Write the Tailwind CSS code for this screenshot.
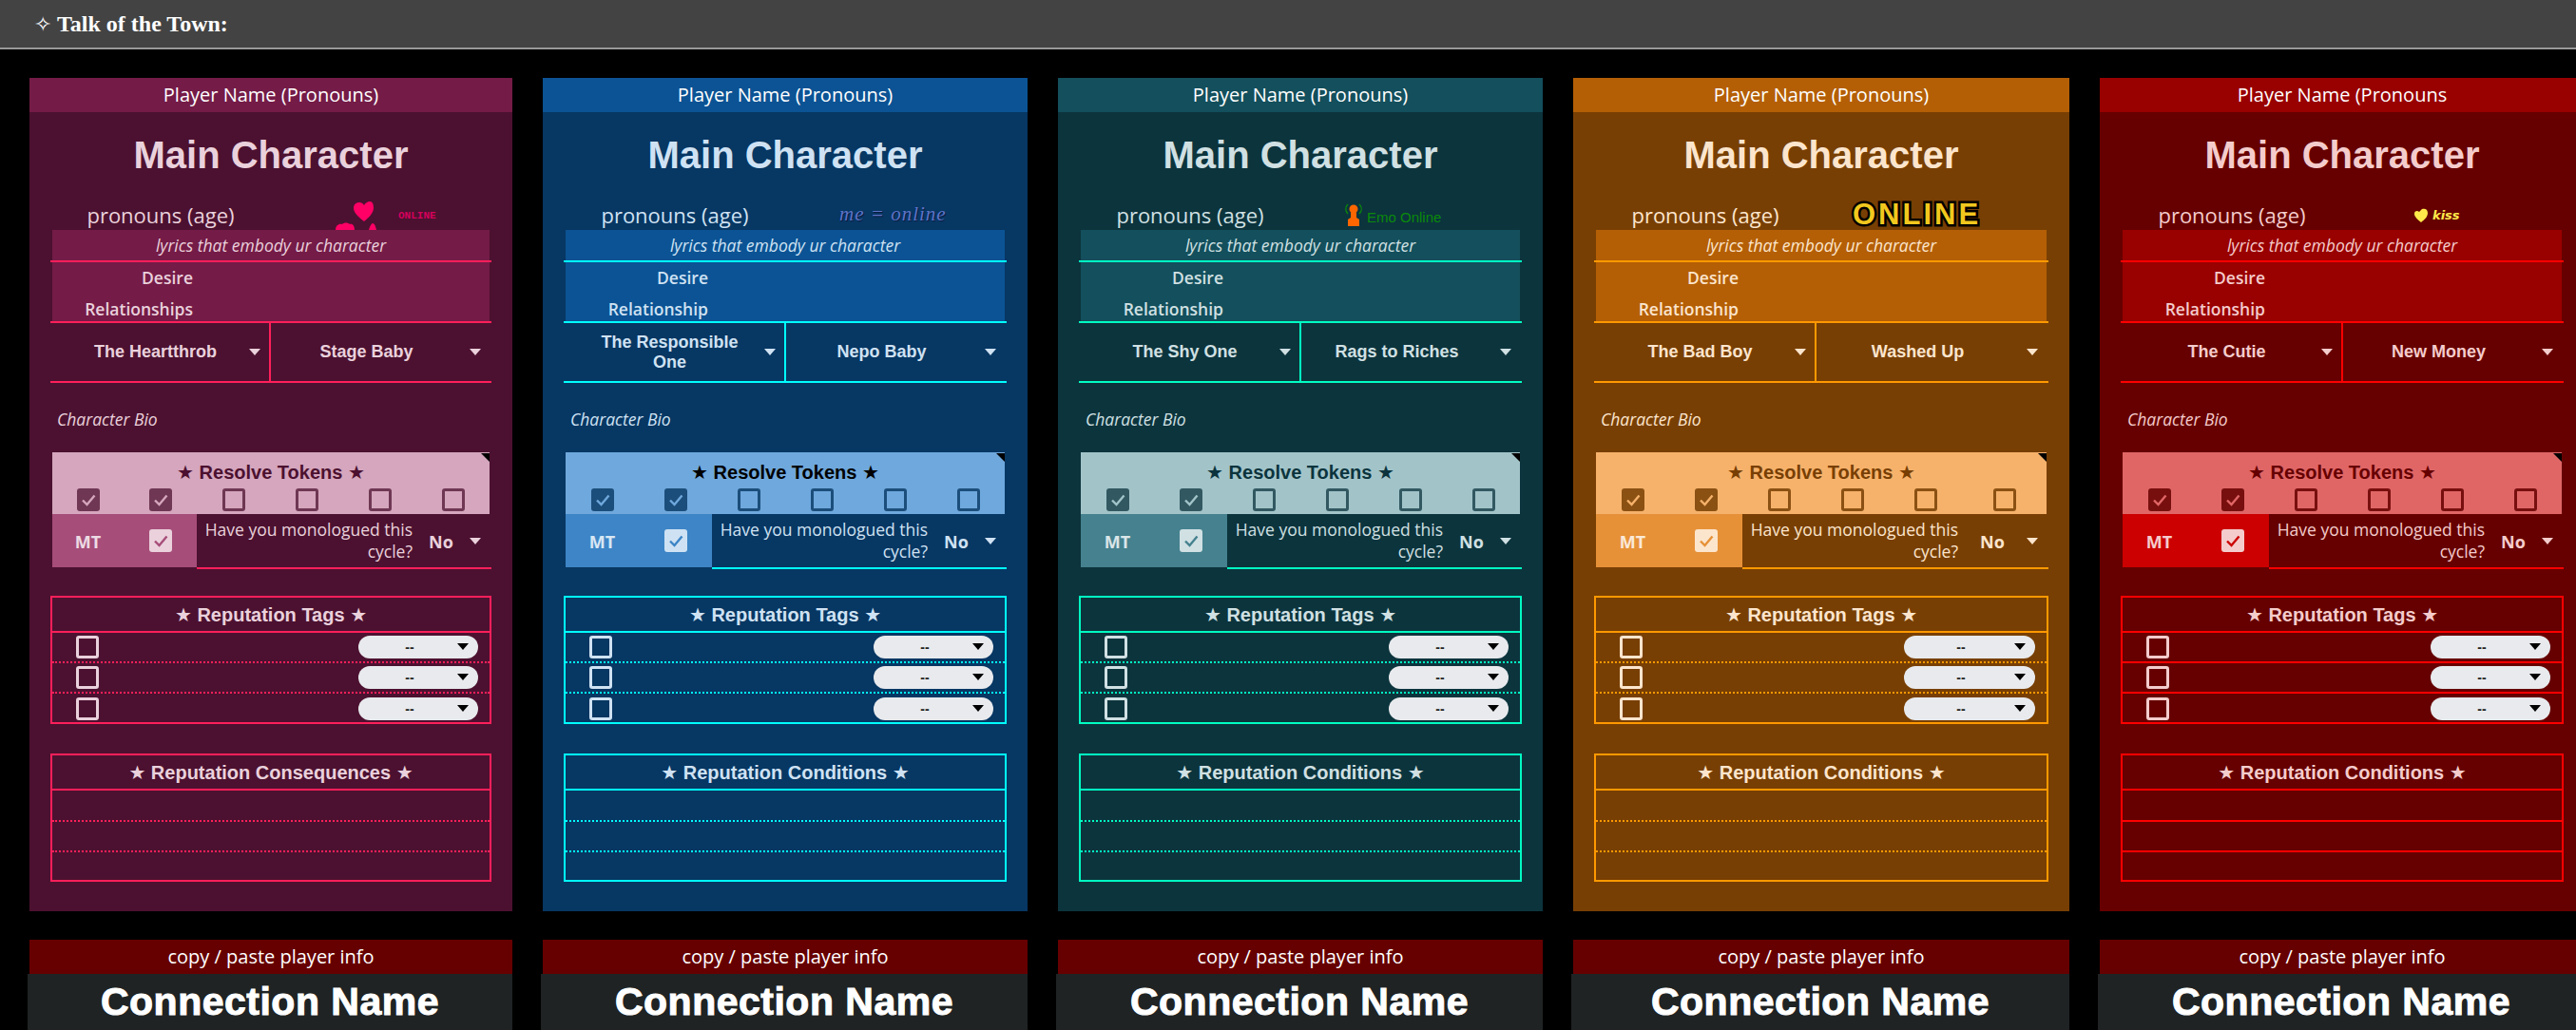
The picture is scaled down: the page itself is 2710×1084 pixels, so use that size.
<!DOCTYPE html>
<html lang="en">
<head>
    <meta charset="UTF-8">
    <meta name="viewport" content="width=device-width, initial-scale=1.0">
    <script src="https://cdn.jsdelivr.net/npm/@tailwindcss/browser@4"></script>
    <title>Talk of the Town</title>
</head>
<body class="bg-black h-[1084px] overflow-hidden font-['Open_Sans',sans-serif]">
    <!--sheet title bar-->
    <div class="h-[52px] bg-[#434343] border-b-2 border-[#999999] flex items-center pl-[36px] text-white font-bold text-[24px] font-['Liberation_Serif',serif]">
        <span class="font-['DejaVu_Sans',sans-serif] text-[22px] w-[24px] font-normal">✧</span>
        <span>Talk of the Town:</span>
    </div>
    <div id="cards" class="flex pl-[31px] pt-[30px] w-[2800px] gap-[32px]"></div>

    <script>
        //little online badges that sit next to the pronouns
        const badgeHeart = `<div class="ml-[68px] mt-[4px] flex items-start h-[30px] overflow-hidden">
            <svg width="66" height="30" viewBox="0 0 66 30" class="fill-[#ff0066] shrink-0">
                <path d="M30 21 C24 16 19 12 19 7 C19 3 22 1 25 1 C27 1 29 2 30 4 C32 1 34 0 36 0 C39 0 40 3 40 7 C40 12 35 17 30 21 Z"/>
                <path d="M0 30 C0 25 4 23 7 24 C9 22 13 22 15 24 C18 23 20 26 20 30 Z"/>
                <path d="M35 30 C36 26 38 23 39 23 C41 23 42 26 43 30 Z"/>
            </svg>
            <span class="font-['Liberation_Mono',monospace] text-[11px] leading-none font-bold text-[#d6005c] mt-[10px]">ONLINE</span>
        </div>`;
        const badgeScript = `<div class="ml-[56px] mt-[4px] font-['Liberation_Serif',serif] italic text-[21px] leading-[26px] tracking-[1px] text-[#5f74c8] [text-shadow:1px_1px_0_#0a1a40]">me = online</div>`;
        const badgeEmo = `<div class="ml-[46px] mt-[4px] flex items-end h-[26px]">
            <svg width="18" height="24" viewBox="0 0 18 24" fill="none" class="shrink-0">
                <path d="M3 1 C0 4 0 8 3 11 M15 1 C18 4 18 8 15 11" class="stroke-[#0a8a0a]" stroke-width="1.3"/>
                <circle cx="9" cy="6" r="4.5" class="fill-[#ff6600]"/>
                <path d="M6 10 H12 V15 L15 17 V24 H3 V17 L6 15 Z" class="fill-[#ff6600]"/>
            </svg>
            <span class="ml-[5px] font-['Liberation_Sans',sans-serif] text-[15px] leading-[18px] text-[#0a8a0a]">Emo Online</span>
        </div>`;
        const badgeGothic = `<div class="ml-[38px] h-[34px] flex items-center font-['Liberation_Sans',sans-serif] font-bold text-[31px] leading-none tracking-[3px] text-[#f2c81e] [-webkit-text-stroke:5px_black] [paint-order:stroke_fill]">ONLINE</div>`;
        const badgeKiss = `<div class="ml-[75px] mt-[9px] flex items-center h-[18px]">
            <svg width="15" height="15" viewBox="0 0 15 15" class="fill-[#ffe94a] shrink-0"><path d="M7 15 C3 12 0 9 0 6 C0 3 3 2 5 4 L8 1 C11 0 14 1 14 5 C14 9 11 12 7 15 Z"/></svg>
            <span class="ml-[4px] font-['DejaVu_Sans',sans-serif] font-bold italic text-[13px] leading-none text-[#ffe94a]">kiss</span>
        </div>`;

        //every class name written out in full per card
        const players = [
            {
                width: "w-[508px]", half: "w-[232px]", firstCol: "w-[75px]", lastCol: "w-[77px]", mtCell: "w-[152px]", labelCol: "w-[148px]", pill: "w-[126px]",
                dark: "bg-[#4c1130]", mid: "bg-[#741b47]", light: "bg-[#d5a6bd]", mt: "bg-[#a64d79]",
                text: "text-[#ead1dc]", title: "text-[#4c1130]",
                lineBg: "bg-[#ff1f5a]", line: "border-[#ff1f5a]", dots: "border-dotted",
                tickBorder: "border-[#4c1130]/75", tickFill: "bg-[#4c1130]/75", tickStroke: "stroke-[#d5a6bd]", mtStroke: "stroke-[#a64d79]",
                paleFill: "bg-[#ead1dc]", paleBorder: "border-[#ead1dc]", arrow: "fill-[#ead1dc]",
                name: "Player Name (Pronouns)", desire: "Relationships", left: "The Heartthrob", right: "Stage Baby", second: "Reputation Consequences", badge: badgeHeart
            },
            {
                width: "w-[510px]", half: "w-[234px]", firstCol: "w-[77px]", lastCol: "w-[77px]", mtCell: "w-[154px]", labelCol: "w-[150px]", pill: "w-[126px]",
                dark: "bg-[#073763]", mid: "bg-[#0b5394]", light: "bg-[#6fa8dc]", mt: "bg-[#3d85c6]",
                text: "text-[#cfe2f3]", title: "text-black",
                lineBg: "bg-[#00ffff]", line: "border-[#00ffff]", dots: "border-dotted",
                tickBorder: "border-[#073763]/80", tickFill: "bg-[#073763]/80", tickStroke: "stroke-[#6fa8dc]", mtStroke: "stroke-[#3d85c6]",
                paleFill: "bg-[#cfe2f3]", paleBorder: "border-[#cfe2f3]", arrow: "fill-[#cfe2f3]",
                name: "Player Name (Pronouns)", desire: "Relationship", left: "The Responsible One", right: "Nepo Baby", second: "Reputation Conditions", badge: badgeScript
            },
            {
                width: "w-[510px]", half: "w-[234px]", firstCol: "w-[77px]", lastCol: "w-[77px]", mtCell: "w-[154px]", labelCol: "w-[150px]", pill: "w-[126px]",
                dark: "bg-[#0c343d]", mid: "bg-[#134f5c]", light: "bg-[#a2c4c9]", mt: "bg-[#45818e]",
                text: "text-[#d0e0e3]", title: "text-[#0c343d]",
                lineBg: "bg-[#00ffc3]", line: "border-[#00ffc3]", dots: "border-dotted",
                tickBorder: "border-[#0c343d]/75", tickFill: "bg-[#0c343d]/75", tickStroke: "stroke-[#a2c4c9]", mtStroke: "stroke-[#45818e]",
                paleFill: "bg-[#d0e0e3]", paleBorder: "border-[#d0e0e3]", arrow: "fill-[#d0e0e3]",
                name: "Player Name (Pronouns)", desire: "Relationship", left: "The Shy One", right: "Rags to Riches", second: "Reputation Conditions", badge: badgeEmo
            },
            {
                width: "w-[522px]", half: "w-[234px]", firstCol: "w-[77px]", lastCol: "w-[89px]", mtCell: "w-[154px]", labelCol: "w-[150px]", pill: "w-[138px]",
                dark: "bg-[#783f04]", mid: "bg-[#b45f06]", light: "bg-[#f6b26b]", mt: "bg-[#e69138]",
                text: "text-[#fce5cd]", title: "text-[#783f04]",
                lineBg: "bg-[#ff9900]", line: "border-[#ff9900]", dots: "border-dotted",
                tickBorder: "border-[#783f04]/85", tickFill: "bg-[#783f04]/85", tickStroke: "stroke-[#f6b26b]", mtStroke: "stroke-[#e69138]",
                paleFill: "bg-[#fce5cd]", paleBorder: "border-[#fce5cd]", arrow: "fill-[#fce5cd]",
                name: "Player Name (Pronouns)", desire: "Relationship", left: "The Bad Boy", right: "Washed Up", second: "Reputation Conditions", badge: badgeGothic
            },
            {
                width: "w-[510px]", half: "w-[234px]", firstCol: "w-[77px]", lastCol: "w-[77px]", mtCell: "w-[154px]", labelCol: "w-[150px]", pill: "w-[126px]",
                dark: "bg-[#660000]", mid: "bg-[#990000]", light: "bg-[#e06666]", mt: "bg-[#cc0000]",
                text: "text-[#f4cccc]", title: "text-[#660000]",
                lineBg: "bg-[#ff0000]", line: "border-[#ff0000]", dots: "border-solid",
                tickBorder: "border-[#660000]/85", tickFill: "bg-[#660000]/85", tickStroke: "stroke-[#e06666]", mtStroke: "stroke-[#cc0000]",
                paleFill: "bg-[#f4cccc]", paleBorder: "border-[#f4cccc]", arrow: "fill-[#f4cccc]",
                name: "Player Name (Pronouns", desire: "Relationship", left: "The Cutie", right: "New Money", second: "Reputation Conditions", badge: badgeKiss
            }
        ];

        //function for the small dropdown triangle
        function arrow(p) {
            return `<svg width="12" height="7" viewBox="0 0 12 7" class="${p.arrow} shrink-0"><path d="M0 0 H12 L6 7 Z"/></svg>`;
        }
        //function for a dropdown cell in the archetype row
        function archetype(p, label) {
            return `<div class="flex-1 pr-[8px] text-center">${label}</div>${arrow(p)}`;
        }
        //function for a checkbox, checked or not
        function tick(borderClass, fillClass, strokeClass, checked) {
            const check = checked ? `<svg width="24" height="24" viewBox="0 0 24 24" fill="none" class="${strokeClass}"><path d="M6 12.5 L10.5 17 L18.5 7.5" stroke-width="2.4"/></svg>` : "";
            return `<div class="w-[24px] h-[24px] rounded-[3px] ${checked ? fillClass : "border-[3px] " + borderClass}">${check}</div>`;
        }
        //function for a row of the reputation tags
        function tagRow(p, extra) {
            return `<div class="h-[32px] flex items-center justify-between pl-[25px] pr-[12px] ${extra}">
                ${tick(p.paleBorder, "", "", false)}
                <div class="${p.pill} h-[24px] rounded-full bg-[#e8eaed] flex items-center">
                    <span class="flex-1 text-center pl-[4px] pt-[1px] text-[#222222] font-['Liberation_Sans',sans-serif] font-bold text-[14px]">--</span>
                    <svg width="12" height="7" viewBox="0 0 12 7" class="fill-black mr-[10px] mb-[2px]"><path d="M0 0 H12 L6 7 Z"/></svg>
                </div>
            </div>`;
        }
        //function for the star headed boxes
        function starTitle(p, label) {
            return `<div class="h-[37px] border-b-2 ${p.line} flex items-center justify-center font-['Liberation_Sans','DejaVu_Sans',sans-serif] font-bold text-[20px] ${p.text}">★ ${label} ★</div>`;
        }

        function card(p) {
            const cols = [p.firstCol, "w-[77px]", "w-[77px]", "w-[77px]", "w-[77px]", p.lastCol];
            const tokens = cols.map((c, i) => `<div class="${c} flex justify-center">${tick(p.tickBorder, p.tickFill, p.tickStroke, i < 2)}</div>`).join("");
            const rowLine = `border-b-2 ${p.dots} ${p.line}`;
            return `<div class="${p.width} shrink-0">
                <div class="h-[877px] ${p.dark} ${p.text}">
                    <div class="h-[36px] ${p.mid} text-white text-[20px] flex items-center justify-center">${p.name}</div>
                    <div class="h-[90px] flex items-center justify-center font-['Liberation_Sans',sans-serif] font-bold text-[40px]">Main Character</div>
                    <div class="mx-[22px] h-[34px] flex">
                        <div class="${p.half} text-center text-[22px] leading-[36px]">pronouns (age)</div>
                        ${p.badge}
                    </div>
                    <div class="mx-[22px]">
                        <div class="mx-[2px] h-[32px] ${p.mid} flex items-center justify-center italic text-[17.5px]">lyrics that embody ur character</div>
                        <div class="h-[2px] ${p.lineBg}"></div>
                        <div class="mx-[2px] h-[62px] ${p.mid} font-semibold text-[17.5px]">
                            <div class="${p.labelCol} h-[32px] leading-[33px] text-right">Desire</div>
                            <div class="${p.labelCol} h-[30px] leading-[34px] text-right">${p.desire}</div>
                        </div>
                        <div class="h-[2px] ${p.lineBg}"></div>
                        <div class="h-[63px] flex border-b-2 ${p.line} font-['Liberation_Sans',sans-serif] font-bold text-[18px] leading-[21px]">
                            <div class="${p.half} shrink-0 border-r-2 ${p.line} flex items-center pr-[9px] pl-[20px]">${archetype(p, p.left)}</div>
                            <div class="flex-1 flex items-center pr-[11px]">${archetype(p, p.right)}</div>
                        </div>
                        <div class="h-[73px] flex items-center pl-[7px] pt-[3px] italic text-[17.5px]">Character Bio</div>
                        <div class="mx-[2px] h-[65px] ${p.light} relative">
                            <div class="absolute top-[1px] right-0 w-[9px] h-[9px] bg-black [clip-path:polygon(0_0,100%_0,100%_100%)]"></div>
                            <div class="h-[38px] pt-[4px] flex items-center justify-center font-['Liberation_Sans','DejaVu_Sans',sans-serif] font-bold text-[20px] ${p.title}">★ Resolve Tokens ★</div>
                            <div class="flex">${tokens}</div>
                        </div>
                        <div class="flex h-[58px]">
                            <div class="${p.mtCell} ml-[2px] h-[56px] ${p.mt} flex shrink-0">
                                <div class="${p.firstCol} flex items-center justify-center font-bold text-[18px] text-[#ffffff]/80 pt-[3px]">MT</div>
                                <div class="flex-1 flex items-center justify-center">${tick("", p.paleFill, p.mtStroke, true)}</div>
                            </div>
                            <div class="flex-1 flex items-center border-b-2 ${p.line}">
                                <div class="w-[227px] shrink-0 text-right text-[17.5px] leading-[23px]">Have you monologued this cycle?</div>
                                <div class="flex-1 text-center font-bold text-[18px] pt-[2px]">No</div>
                                <div class="mr-[11px]">${arrow(p)}</div>
                            </div>
                        </div>
                        <div class="mt-[28px] border-2 ${p.line}">
                            ${starTitle(p, "Reputation Tags")}
                            ${tagRow(p, rowLine)}
                            ${tagRow(p, rowLine)}
                            <div class="-mb-[2px]">${tagRow(p, "")}</div>
                        </div>
                        <div class="mt-[31px] border-2 ${p.line}">
                            ${starTitle(p, p.second)}
                            <div class="h-[33px] ${rowLine}"></div>
                            <div class="h-[32px] ${rowLine}"></div>
                            <div class="h-[29px]"></div>
                        </div>
                    </div>
                </div>
                <div class="mt-[30px] h-[36px] bg-[#660000] text-white text-[20px] flex items-center justify-center">copy / paste player info</div>
                <div class="-ml-[2px] h-[59px] bg-[#1f2324] text-white flex items-center justify-center font-['Liberation_Sans',sans-serif] font-bold text-[41px] tracking-[0.5px] [-webkit-text-stroke:1px_white]">Connection Name</div>
            </div>`;
        }

        document.getElementById("cards").innerHTML = players.map(card).join("");
    </script>
</body>
</html>
